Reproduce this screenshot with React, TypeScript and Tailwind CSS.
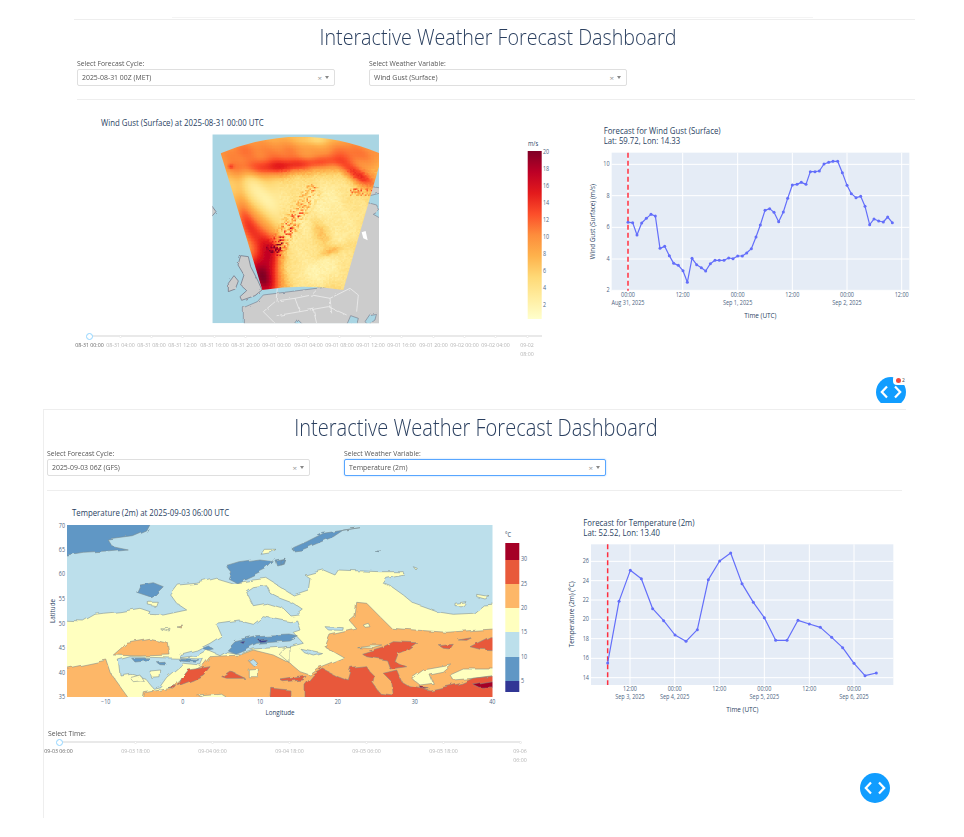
import React from "react";

// figures are traced in the coordinates of 3x crops, hence the scaled numbers
const TITLE = "#2a3f5f";
const TICK = "#506784";

function z(ox: number, oy: number) {
  return (s: string) =>
    s
      .trim()
      .split(/\s+/)
      .map((p) => {
        const [x, y] = p.split(",").map(Number);
        return `${(ox + x / 3).toFixed(1)},${(oy + y / 3).toFixed(1)}`;
      })
      .join(" ");
}
const z8 = z(40, 515);
const z9 = z(280, 515);

// the capture is squeezed sideways, so svg text is too
function T(props: {
  x: number;
  y: number;
  size: number;
  fill: string;
  anchor?: "start" | "middle" | "end";
  rotate?: number;
  k?: number;
  children: React.ReactNode;
}) {
  const { x, y, size, fill, anchor, rotate, k = 0.87, children } = props;
  return (
    <text
      transform={`translate(${x} ${y})${rotate ? ` rotate(${rotate})` : ""} scale(${k} 1)`}
      fontSize={size}
      fill={fill}
      textAnchor={anchor}
    >
      {children}
    </text>
  );
}

function Select({ value, focused, className }: { value: string; focused?: boolean; className: string }) {
  return (
    <div
      className={`flex h-[17px] items-center rounded-[2px] border bg-white pl-[4px] pr-[4px] text-[7.9px] text-[#555] ${
        focused ? "border-[#58a6ff] shadow-[0_0_2px_#a8d1ff]" : "border-[#dfdfdf]"
      } ${className}`}
    >
      <span className="flex-1 origin-left scale-x-[0.875]">{value}</span>
      <span className="mr-[3px] text-[8px] leading-none text-[#999]">×</span>
      <span className="mr-[1px] h-0 w-0 border-x-[2.5px] border-t-[3px] border-x-transparent border-t-[#888]" />
    </div>
  );
}

function Field({ label, value, focused, className }: { label: string; value: string; focused?: boolean; className: string }) {
  return (
    <div className={className}>
      <div className="h-[11px] origin-left scale-x-[0.87] text-[7.8px] leading-[11px] text-[#555]">{label}</div>
      <Select value={value} focused={focused} className="w-full" />
    </div>
  );
}

function Slider({ labels, step, track }: { labels: string[]; step: number; track: number }) {
  return (
    <div>
      <div className="relative h-[2px] bg-[#e9e9e9]" style={{ width: track }}>
        <div className="flex h-[2px] items-center">
          {labels.map((l, i) => (
            <span key={l} className="flex h-[2px] shrink-0 items-center" style={{ width: i === labels.length - 1 ? 4 : step }}>
              <span
                className={
                  i === 0
                    ? "z-10 -ml-[3px] h-[7px] w-[7px] rounded-full border border-[#91d5ff] bg-white"
                    : "-ml-[1.5px] h-[3px] w-[3px] rounded-full border border-[#e8e8e8] bg-white"
                }
              />
            </span>
          ))}
        </div>
      </div>
      <div className="mt-[3px] flex text-[6.1px] leading-[9px] text-[#b5b5b5]">
        {labels.map((l, i) => (
          <div
            key={l}
            className={`flex shrink-0 justify-center text-center ${i === 0 ? "text-[#666]" : ""} ${
              i === labels.length - 1 ? "whitespace-normal" : "whitespace-nowrap"
            }`}
            style={{ width: i === labels.length - 1 ? 20 : step, marginLeft: i === labels.length - 1 ? -10 : -step / 2, marginRight: step / 2 }}
          >
            <span className="inline-block scale-x-[0.86]">{l}</span>
          </div>
        ))}
      </div>
    </div>
  );
}

function Fab({ className }: { className: string }) {
  return (
    <div className={`absolute flex h-[30px] w-[30px] items-center justify-center rounded-full bg-[#119dff] ${className}`}>
      <svg width="22" height="14" viewBox="0 0 22 14" fill="none" stroke="white" strokeWidth="2.2">
        <path d="M7 1.5 L1.8 7 L7 12.5" />
        <path d="M15 1.5 L20.2 7 L15 12.5" />
      </svg>
    </div>
  );
}

type Pt = [number, number];

function LineChart(props: {
  viewBox: string;
  width: number;
  height: number;
  titleX: number;
  titleY: number;
  title: string;
  subtitle: string;
  box: [number, number, number, number];
  yTicks: [string, number][];
  xTicks: [number, string, string?][];
  points: Pt[];
  dashX: number;
  yTitle: string;
  yTitleAt: Pt;
  xTitleAt: Pt;
  tickY: number;
}) {
  const [l, t, r, b] = props.box;
  return (
    <svg width={props.width} height={props.height} viewBox={props.viewBox} className="shrink-0">
      <T x={props.titleX} y={props.titleY} size={26} fill={TITLE} k={0.9}>{props.title}</T>
      <T x={props.titleX} y={props.titleY + 31} size={26} fill={TITLE} k={0.9}>{props.subtitle}</T>
      <rect x={l} y={t} width={r - l} height={b - t} fill="#e5ecf6" />
      {props.yTicks.map(([s, y]) => (
        <g key={s}>
          <line x1={l} x2={r} y1={y} y2={y} stroke="white" strokeWidth="3" />
          <T x={l - 6} y={y + 6} size={19} anchor="end" fill={TICK}>{s}</T>
        </g>
      ))}
      {props.xTicks.map(([x, a, c]) => (
        <g key={x}>
          <line x1={x} x2={x} y1={t} y2={b} stroke="white" strokeWidth="3" />
          <T x={x} y={props.tickY} size={19} anchor="middle" fill={TICK}>{a}</T>
          {c && <T x={x} y={props.tickY + 23} size={19} anchor="middle" fill={TICK}>{c}</T>}
        </g>
      ))}
      <line x1={props.dashX} x2={props.dashX} y1={t} y2={b} stroke="#ff2f3f" strokeWidth="4.5" strokeDasharray="15 9" />
      <polyline points={props.points.map((p) => p.join(",")).join(" ")} fill="none" stroke="#636efa" strokeWidth="3.6" strokeLinejoin="round" />
      {props.points.map(([x, y]) => (
        <circle key={x} cx={x} cy={y} r="4.5" fill="#636efa" />
      ))}
      <T x={props.xTitleAt[0]} y={props.xTitleAt[1]} size={22} anchor="middle" fill={TITLE}>Time (UTC)</T>
      <T x={props.yTitleAt[0]} y={props.yTitleAt[1]} size={22} anchor="middle" rotate={-90} fill={TITLE}>{props.yTitle}</T>
    </svg>
  );
}

// --- wind gust heat map ---
const STOPS = ["#ffffcc", "#ffeda0", "#fed976", "#feb24c", "#fd8d3c", "#fc4e2a", "#e31a1c", "#bd0026", "#800026"];
function colorAt(v: number) {
  const t = (Math.min(20, Math.max(0, v)) / 20) * (STOPS.length - 1);
  const i = Math.min(STOPS.length - 2, Math.floor(t));
  const f = t - i;
  const ch = (h: string, o: number) => parseInt(h.slice(o, o + 2), 16);
  const m = (o: number) => Math.round(ch(STOPS[i], o) * (1 - f) + ch(STOPS[i + 1], o) * f);
  return `rgb(${m(1)},${m(3)},${m(5)})`;
}
const BLOBS: number[][] = [
  [230, 128, 90, 18, -2, 6.5],
  [340, 113, 60, 13, -5, 3],
  [480, 155, 48, 16, 32, 8],
  [92, 125, 6, 5, 0, 3],
  [200, 80, 190, 34, 0, 4.5],
  [470, 90, 60, 34, 0, 4],
  [335, 45, 45, 13, 0, -2.5],
  [170, 205, 55, 30, 35, -3.8],
  [370, 270, 105, 115, 0, -4.2],
  [345, 445, 105, 45, 0, -2.8],
  [190, 455, 32, 50, -15, 15],
  [213, 375, 22, 38, -20, 8],
  [160, 315, 30, 40, -20, 6.5],
  [130, 255, 18, 50, -15, 3],
  [360, 320, 20, 40, -20, 3.4],
  [395, 378, 30, 9, -20, 3.8],
  [120, 180, 16, 40, -15, 1.5],
];
function rnd(x: number, y: number) {
  const s = Math.sin(x * 12.9898 + y * 78.233) * 43758.5453;
  return s - Math.floor(s);
}
function gust(X: number, Y: number) {
  let v = 6.3;
  for (const [cx, cy, sx, sy, a, amp] of BLOBS) {
    const r = (a * Math.PI) / 180;
    const dx = X - cx;
    const dy = Y - cy;
    const u = (dx * Math.cos(r) + dy * Math.sin(r)) / sx;
    const w = (-dx * Math.sin(r) + dy * Math.cos(r)) / sy;
    v += amp * Math.exp(-0.5 * (u * u + w * w));
  }
  v += Math.sin(X / 23 + Y / 31) * 0.4 + Math.sin(X / 11 - Y / 17) * 0.25;
  // speckled front along the diagonal
  const tt = ((X - 230) * 105 + (Y - 370) * -170) / (105 * 105 + 170 * 170);
  const px = 230 + 105 * tt;
  const py = 370 - 170 * tt;
  const d = Math.hypot(X - px, Y - py);
  const n = rnd(Math.round(X / 4.5), Math.round(Y / 4.5));
  if (tt > -0.1 && tt < 1.1) v += Math.exp(-(d * d) / 420) * (n * n * n * 15) * (1.1 - tt * 0.5);
  if (X > 240 && Y > 130) v += (n - 0.5) * 1.3;
  if (X > 450 && Y > 190 && Y < 215) v += n * n * n * 8;
  return v;
}
const CELLS: { x: number; y: number; c: string }[] = [];
for (let Y = 24; Y < 506; Y += 4.5) {
  for (let X = 54; X < 546; X += 4.5) {
    CELLS.push({ x: X, y: Y, c: colorAt(gust(X + 2, Y + 2)) });
  }
}

function WindMap() {
  return (
    <svg width="486" height="230" viewBox="74 105 486 230" className="shrink-0">
      <T x={101} y={125.5} size={9} fill={TITLE}>Wind Gust (Surface) at 2025-08-31 00:00 UTC</T>
      <defs>
        <clipPath id="fan">
          <path d="M62 85 Q300 -15 540 85 L537 125 L430 495 Q310 475 187 495 Z" />
        </clipPath>
        <clipPath id="mapbox">
          <rect x="37" y="28" width="500" height="567" />
        </clipPath>
        <filter id="soft" x="-5%" y="-5%" width="110%" height="110%">
          <feGaussianBlur stdDeviation="1.8" />
        </filter>
        <filter id="coast" x="-5%" y="-5%" width="110%" height="110%">
          <feTurbulence type="fractalNoise" baseFrequency="0.05" numOctaves="3" seed="4" />
          <feDisplacementMap in="SourceGraphic" scale="8" />
        </filter>
        <linearGradient id="ylorrd" x1="0" x2="0" y1="1" y2="0">
          {STOPS.map((c, i) => (
            <stop key={c} offset={i / (STOPS.length - 1)} stopColor={c} />
          ))}
        </linearGradient>
      </defs>
      <g transform="translate(200 125) scale(0.3333)">
        <g clipPath="url(#mapbox)">
          <rect x="37" y="28" width="500" height="567" fill="#a9d5e3" />
          <g filter="url(#coast)">
            <polygon
              points="515,185 550,190 537,205 510,212 500,232 530,240 537,258 520,268 550,285 550,610 130,610 130,548 172,530 190,510 430,480"
              fill="#cccccc"
              stroke="#667"
              strokeWidth="1.5"
            />
            <polygon points="122,392 145,395 152,425 165,450 175,470 186,495 165,512 125,526 120,515 140,497 122,480 132,450 114,420" fill="#cccccc" stroke="#667" strokeWidth="2" />
            <polygon points="85,475 102,452 115,468 106,492 85,500" fill="#cccccc" stroke="#667" strokeWidth="2" />
            <polygon points="30,235 48,260 30,280" fill="#cccccc" stroke="#667" strokeWidth="2" />
            <polygon points="285,600 295,586 310,600" fill="#a9d5e3" stroke="#667" strokeWidth="1.5" />
            <polygon points="440,600 452,572 475,580 470,600" fill="#a9d5e3" stroke="#667" strokeWidth="1.5" />
            <polygon points="495,590 510,568 530,565 525,585 505,600" fill="#a9d5e3" stroke="#667" strokeWidth="1.5" />
          </g>
          <polygon points="485,322 497,318 503,346 490,340" fill="white" />
          <polygon points="460,350 470,350 468,361 460,360" fill="white" />
          <g fill="none" stroke="#f4f4f4" strokeWidth="2" filter="url(#coast)">
            <polyline points="232,490 228,528 190,560 225,595" />
            <polyline points="228,528 285,520 335,510 390,520 395,565" />
            <polyline points="285,520 300,560 230,572" />
            <polyline points="300,560 385,545 440,570" />
            <polyline points="390,520 450,490 475,510 470,560" />
            <polyline points="335,510 355,490" />
            <polyline points="340,553 350,595" />
          </g>
        </g>
        <g clipPath="url(#mapbox)">
          <g clipPath="url(#fan)">
            <g filter="url(#soft)">
              {CELLS.map((d) => (
                <rect key={`${d.x}-${d.y}`} x={d.x} y={d.y} width="7" height="7" fill={d.c} />
              ))}
            </g>
          </g>
        </g>
      </g>
      <T x={528} y={146} size={6.6} fill={TITLE}>m/s</T>
      <rect x="527.7" y="151" width="14" height="168" fill="url(#ylorrd)" />
      {[20, 18, 16, 14, 12, 10, 8, 6, 4, 2].map((v) => (
        <T key={v} x={543} y={152 + (20 - v) * 8.5 + 2} size={6.2} fill={TICK}>{v}</T>
      ))}
    </svg>
  );
}

// --- temperature contour map ---
const LINE = "#7b8a8c";
const LIGHT = "#bcdfeb";
const YELLOW = "#ffffbf";
const ORANGE = "#fdb768";
const RED = "#e8593a";
const BLUE = "#6097c5";

function Area({ points, fill }: { points: string; fill: string }) {
  return <polygon points={points} fill={fill} stroke={LINE} strokeWidth="0.55" strokeLinejoin="round" />;
}

function TempMap() {
  const bands: [number, number, string][] = [
    [543, 560, "#a50026"],
    [560, 584, RED],
    [584, 608, ORANGE],
    [608, 632, YELLOW],
    [632, 657, LIGHT],
    [657, 681, BLUE],
    [681, 692, "#313695"],
  ];
  const lonTicks: [string, number][] = [
    ["−10", 105.7],
    ["0", 182.7],
    ["10", 260],
    ["20", 337.7],
    ["30", 414.7],
    ["40", 492.3],
  ];
  const latTicks: [string, number][] = [
    ["70", 525.7],
    ["65", 550],
    ["60", 574.4],
    ["55", 599],
    ["50", 623.7],
    ["45", 648],
    ["40", 672.7],
    ["35", 697],
  ];
  return (
    <svg width="506" height="228" viewBox="44 497 506 228" className="shrink-0">
      <defs>
        <clipPath id="plot">
          <rect x="67" y="525" width="425.5" height="172" />
        </clipPath>
        <filter id="wiggle" x="-5%" y="-5%" width="110%" height="110%">
          <feTurbulence type="fractalNoise" baseFrequency="0.07" numOctaves="3" seed="9" />
          <feDisplacementMap in="SourceGraphic" scale="5" />
        </filter>
      </defs>
      <T x={72} y={516} size={9} fill={TITLE}>Temperature (2m) at 2025-09-03 06:00 UTC</T>
      <g clipPath="url(#plot)">
        <g filter="url(#wiggle)">
        <rect x="57" y="515" width="446" height="192" fill={LIGHT} />
        <Area
          fill={YELLOW}
          points={`${z8("40,316 80,316 130,318 165,298 190,295 240,290 300,280 330,290 325,298 370,300 440,285 410,265 392,240 415,210 470,205 530,190 580,205 640,195 680,190 720,215")} ${z9("40,240 85,225 90,190 75,180 130,165 165,180 175,165 300,170 370,170 375,180 320,190 310,205 335,215 370,240 400,265 470,290 520,298 580,295 610,270 670,265 670,590")} ${z8("40,590")}`}
        />
        <Area fill={LIGHT} points={z8("680,212 640,218 620,232 640,272 680,265 730,280 750,300 775,297 790,285 760,265 720,250 690,235")} />
        <Area fill={LIGHT} points={`${z8("420,418 470,405 510,385 545,362 530,328 600,318 640,328 670,305 750,320")} ${z9("50,315 60,345 40,352 70,385 30,395")} ${z8("640,402 600,417 560,410 540,422 500,405 470,422 420,428")}`} />
        <Area fill={LIGHT} points={z9("135,335 190,338 188,346 145,345")} />
        <Area fill={LIGHT} points={z9("60,400 125,413 100,420 70,410")} />
        <Area fill={LIGHT} points={z8("235,435 270,425 490,432 482,450 430,445 400,470 380,487 360,515 340,520 315,490 270,475 240,480")} />
        <Area fill={YELLOW} points={z8("330,468 362,465 360,488 335,490")} />
        <Area fill={YELLOW} points={z8("270,488 300,480 310,497 280,500")} />
        <Area fill={ORANGE} points={z8("30,465 80,460 200,435 215,480 295,590 30,590")} />
        <Area fill={ORANGE} points={z8("220,420 260,385 330,373 385,385 390,420 300,423")} />
        <Area
          fill={ORANGE}
          points={`${z8("300,590 310,530 400,515 440,480 490,450 510,425 600,420 640,405 700,420 750,445")} ${z9("60,470 90,480 115,462 170,440 195,430 135,395 150,360 230,342 210,318 225,305 230,262 260,265 300,305 335,340 500,352 670,340 670,590")}`}
        />
        <Area fill={LIGHT} points={z8("628,440 640,433 650,442 640,452")} />
        <Area fill={YELLOW} points={z8("625,462 655,460 655,485 625,485")} />
        <Area fill={YELLOW} points={z8("715,415 735,395 750,395 750,445")} />
        <Area fill={YELLOW} points={z9("250,330 265,325 270,335 255,337")} />
        <Area fill={YELLOW} points={z9("230,395 270,390 305,390 280,397")} />
        <Area fill={YELLOW} points={z9("395,490 430,465 515,450 490,472 450,480 460,505 420,510")} />
        <Area fill={YELLOW} points={z9("510,480 550,462 670,462 670,478 580,490 520,495")} />
        <Area fill={YELLOW} points={z8("470,540 540,535 560,547 500,550")} />
        <Area fill={RED} points={z8("415,512 425,490 445,465 510,455 490,480 460,495")} />
        <Area fill={RED} points={z8("545,485 570,468 615,490 560,490")} />
        <Area fill={RED} points={z8("690,590 695,520 750,525 750,590")} />
        <Area fill={RED} points={z8("385,518 410,512 405,520")} />
        <Area fill={RED} points={z9("0,495 78,484 70,495 10,500")} />
        <Area
          fill={RED}
          points={z9("75,590 75,510 100,480 130,462 165,480 205,495 215,460 260,455 270,470 280,480 275,500 300,535 340,540 335,500 310,475 350,465 365,500 390,515 450,525 545,505 580,490 670,480 670,590")}
        />
        <Area fill={RED} points={z9("245,415 310,395 340,380 410,383 380,405 355,415 345,440 380,455 330,462 320,435 260,425")} />
        <Area fill={RED} points={z9("570,395 630,365 670,365 670,405 600,403")} />
        <Area fill={RED} points={z9("478,392 520,388 510,402 490,400")} />
        <Area fill={RED} points={z9("535,375 575,368 560,376")} />
        <Area fill="#a50026" points={z9("580,510 670,495 670,518 600,520")} />
        <Area fill="#a50026" points={z9("420,515 445,518 425,521")} />
        <Area fill={BLUE} points={z8("40,10 340,10 320,48 280,65 205,75 215,92 262,102 200,108 130,112 80,120 40,122")} />
        <Area fill={BLUE} points={z8("560,155 600,143 660,135 700,140 680,160 640,180 590,203 565,190 572,170")} />
        <Area fill={BLUE} points={z8("705,135 735,130 730,145 710,150")} />
        <Area fill={BLUE} points={z8("300,210 340,203 370,215 345,240 330,245 290,232")} />
        <Area fill={BLUE} points={z9("40,98 80,80 130,55 240,38 190,45 160,65 100,90 65,105 40,108")} />
        <Area fill={BLUE} points={z9("0,135 15,130 5,145 0,147")} />
        <Area fill={BLUE} points={`${z8("562,405 585,380 650,365 750,360")} ${z9("55,365 30,378")} ${z8("750,378 650,385 610,405 585,415")}`} />
        <Area fill={BLUE} points={z8("488,400 505,393 523,405 505,408")} />
        <Area fill={BLUE} points={z8("275,430 330,430 320,438 285,441")} />
        <Area fill={BLUE} points={z8("352,443 375,442 378,450 360,449")} />
        <Area fill={BLUE} points={z8("415,432 480,437 470,442 420,438")} />
        <Area fill="#313695" points={z8("655,375 680,372 675,378 658,380")} />
        <Area fill="#313695" points={z8("600,382 615,378 610,386")} />
        <Area fill={YELLOW} points={z8("670,100 705,100 690,110 660,115")} />
        <Area fill={YELLOW} points={z8("325,262 355,262 350,275 325,270")} />
        <Area fill={YELLOW} points={z8("362,342 390,340 388,348")} />
        <Area fill={ORANGE} points={z8("408,333 428,330 422,336")} />
        <Area fill={YELLOW} points={z9("525,265 558,260 550,272 525,272")} />
        <Area fill={YELLOW} points={z9("590,238 630,245 615,252 590,245")} />
        <Area fill={YELLOW} points={z9("400,155 412,160 408,165")} />
        <Area fill={BLUE} points={z9("285,108 303,108 295,110")} />
        </g>
      </g>
      {lonTicks.map(([s, x]) => (
        <T key={s} x={x} y={704} size={6.2} anchor="middle" fill={TICK}>{s}</T>
      ))}
      {latTicks.map(([s, y]) => (
        <T key={s} x={65} y={y + 2} size={6.2} anchor="end" fill={TICK}>{s}</T>
      ))}
      <T x={280} y={715} size={7.2} anchor="middle" fill={TITLE}>Longitude</T>
      <T x={55} y={611} size={7.2} anchor="middle" rotate={-90} fill={TITLE}>Latitude</T>
      <T x={505} y={537} size={6.6} fill={TITLE}>°C</T>
      {bands.map(([a, b, c]) => (
        <rect key={a} x="505.3" y={a} width="14" height={b - a} fill={c} />
      ))}
      {(
        [
          ["30", 559],
          ["25", 584],
          ["20", 608],
          ["15", 632],
          ["10", 657],
          ["5", 681],
        ] as [string, number][]
      ).map(([s, y]) => (
        <T key={s} x={521} y={y + 2} size={6.2} fill={TICK}>{s}</T>
      ))}
    </svg>
  );
}

const GUST: Pt[] = [
  [384, 307], [398, 308], [411, 345], [425, 309], [439, 295], [453, 283], [466, 288], [480, 385], [494, 379], [508, 407],
  [521, 430], [535, 436], [549, 452], [562, 487], [576, 415], [590, 434], [604, 443], [617, 453], [631, 431], [645, 421],
  [658, 421], [672, 421], [686, 414], [699, 416], [713, 408], [727, 408], [740, 399], [754, 386], [768, 351], [781, 315],
  [795, 271], [809, 266], [822, 277], [836, 305], [850, 276], [863, 235], [877, 195], [891, 193], [904, 187], [918, 193],
  [931, 155], [945, 155], [958, 153], [972, 132], [986, 127], [999, 124], [1013, 124], [1027, 158], [1041, 196], [1054, 221],
  [1068, 233], [1082, 229], [1095, 259], [1109, 314], [1122, 297], [1136, 303], [1150, 306], [1163, 291], [1177, 308],
];
const TEMP: Pt[] = [
  [173, 459], [207, 274], [241, 181], [274, 206], [308, 296], [341, 332], [375, 375], [408, 394], [442, 359], [475, 209],
  [509, 153], [542, 129], [576, 221], [610, 277], [643, 323], [677, 391], [711, 391], [744, 331], [778, 342], [811, 352],
  [845, 382], [878, 413], [912, 460], [945, 497], [979, 489],
];

const TIMES_A = [
  "08-31 00:00", "08-31 04:00", "08-31 08:00", "08-31 12:00", "08-31 16:00", "08-31 20:00", "09-01 00:00", "09-01 04:00",
  "09-01 08:00", "09-01 12:00", "09-01 16:00", "09-01 20:00", "09-02 00:00", "09-02 04:00", "09-02 08:00",
];
const TIMES_B = ["09-03 06:00", "09-03 18:00", "09-04 06:00", "09-04 18:00", "09-05 06:00", "09-05 18:00", "09-06 06:00"];

export default function App() {
  return (
    <div className="h-[837px] w-[964px] overflow-hidden bg-white font-['Open_Sans','Liberation_Sans',sans-serif]">
      {/* first capture */}
      <div className="relative h-[403px] overflow-hidden">
        <div className="ml-[74px] w-[841px] pt-[17px]">
          <div className="ml-[98px] h-px w-[641px] bg-[#f4f4f4]" />
          <div className="mt-px h-px bg-[#eeeeee]" />
          <h1 className="mt-[3px] h-[28px] scale-x-[0.864] pl-[8px] text-center text-[22.8px] font-light leading-[28px] text-[#2a3f5f]">
            Interactive Weather Forecast Dashboard
          </h1>
          <div className="mt-[7px] flex pl-[3px]">
            <Field className="w-[258px]" label="Select Forecast Cycle:" value="2025-08-31 00Z (MET)" />
            <Field className="ml-[34px] w-[258px]" label="Select Weather Variable:" value="Wind Gust (Surface)" />
          </div>
          <div className="ml-[3px] mt-[13px] h-px bg-[#eeeeee]" />
          <div className="mt-[5px] flex">
            <WindMap />
            <LineChart
              viewBox="180 -45 1065 690"
              width={355}
              height={230}
              titleX={311}
              titleY={42}
              title="Forecast for Wind Gust (Surface)"
              subtitle="Lat: 59.72, Lon: 14.33"
              box={[335, 98, 1228, 512]}
              yTicks={[["10", 133], ["8", 227], ["6", 322], ["4", 417], ["2", 511]]}
              xTicks={[[384, "00:00", "Aug 31, 2025"], [548, "12:00"], [713, "00:00", "Sep 1, 2025"], [877, "12:00"], [1041, "00:00", "Sep 2, 2025"], [1205, "12:00"]]}
              points={GUST}
              dashX={384}
              yTitle="Wind Gust (Surface) (m/s)"
              yTitleAt={[284, 305]}
              xTitleAt={[781, 593]}
              tickY={532}
            />
          </div>
          <div className="ml-[15px]">
            <Slider labels={TIMES_A} step={31.3} track={453} />
          </div>
        </div>
        <Fab className="left-[876px] top-[377px]" />
        <div className="absolute left-[893px] top-[375px] flex h-[10px] w-[15px] items-center justify-center gap-[1px] rounded-[4px] bg-white">
          <span className="h-[5px] w-[5px] rounded-full bg-[#f04a3e]" />
          <span className="text-[5px] leading-none text-[#444]">2</span>
        </div>
      </div>

      {/* second capture */}
      <div className="relative ml-[43px] mt-[6px] h-[409px] w-[863px] border-l border-t border-[#eeeeee]">
        <h1 className="mt-[3px] h-[28px] scale-x-[0.872] pl-[2px] text-center text-[23px] font-light leading-[28px] text-[#2a3f5f]">
          Interactive Weather Forecast Dashboard
        </h1>
        <div className="mt-[7px] flex pl-[3px]">
          <Field className="w-[263px]" label="Select Forecast Cycle:" value="2025-09-03 06Z (GFS)" />
          <Field className="ml-[34px] w-[262px]" label="Select Weather Variable:" value="Temperature (2m)" focused />
        </div>
        <div className="ml-[3px] mr-[4px] mt-[14px] h-px bg-[#eeeeee]" />
        <div className="mt-[6px] flex">
          <TempMap />
          <LineChart
            viewBox="0 -39 1065 684"
            width={355}
            height={228}
            titleX={100}
            titleY={47}
            title="Forecast for Temperature (2m)"
            subtitle="Lat: 52.52, Lon: 13.40"
            box={[123, 103, 1030, 525]}
            yTicks={[["26", 154], ["24", 212], ["22", 270], ["20", 328], ["18", 386], ["16", 445], ["14", 503]]}
            xTicks={[[240, "12:00", "Sep 3, 2025"], [374, "00:00", "Sep 4, 2025"], [508, "12:00"], [643, "00:00", "Sep 5, 2025"], [778, "12:00"], [912, "00:00", "Sep 6, 2025"]]}
            points={TEMP}
            dashX={173}
            yTitle="Temperature (2m) (°C)"
            yTitleAt={[71, 313]}
            xTitleAt={[577, 606]}
            tickY={543}
          />
        </div>
        <div className="ml-[4px] mt-[3px] h-[11px] origin-left scale-x-[0.87] text-[7.8px] leading-[11px] text-[#555]">Select Time:</div>
        <div className="ml-[15px] mt-[2px]">
          <Slider labels={TIMES_B} step={76.9} track={461} />
        </div>
        <Fab className="left-[816px] top-[363px]" />
      </div>
    </div>
  );
}
